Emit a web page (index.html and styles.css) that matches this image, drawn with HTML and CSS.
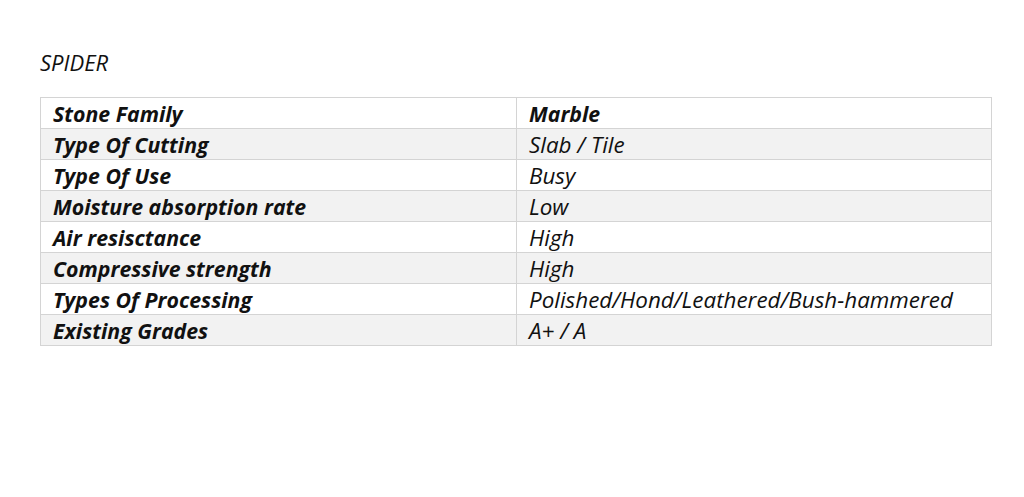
FILE: index.html
```html
<!DOCTYPE html>
<html>
<head>
<meta charset="utf-8">
<link rel="stylesheet" href="styles.css">
</head>
<body>
<div class="page">
  <p class="title">SPIDER</p>
  <table class="spec">
    <tr><td class="key">Stone Family</td><td class="val strong">Marble</td></tr>
    <tr class="alt"><td class="key">Type Of Cutting</td><td class="val">Slab / Tile</td></tr>
    <tr><td class="key">Type Of Use</td><td class="val">Busy</td></tr>
    <tr class="alt"><td class="key">Moisture absorption rate</td><td class="val">Low</td></tr>
    <tr><td class="key">Air resisctance</td><td class="val">High</td></tr>
    <tr class="alt"><td class="key">Compressive strength</td><td class="val">High</td></tr>
    <tr><td class="key">Types Of Processing</td><td class="val">Polished/Hond/Leathered/Bush-hammered</td></tr>
    <tr class="alt"><td class="key">Existing Grades</td><td class="val">A+ / A</td></tr>
  </table>
</div>
</body>
</html>
```
FILE: styles.css
```css
html, body {
  margin: 0;
  padding: 0;
  background: #ffffff;
}
.page {
  padding: 47px 32px 0 40px;
  font-family: "Open Sans", "Liberation Sans", sans-serif;
  font-style: italic;
  color: #111111;
}
.title {
  margin: 0 0 20px 0;
  font-size: 22px;
  line-height: 30px;
}
.spec {
  width: 952px;
  border-collapse: collapse;
  font-size: 22.4px;
}
.spec td {
  border: 1px solid #d4d4d4;
  height: 30px;
  padding: 0 12px;
  line-height: 29px;
  vertical-align: middle;
  white-space: nowrap;
}
.spec .key {
  width: 451px;
  font-weight: 700;
  font-size: 21.3px;
}
.spec .strong {
  font-weight: 700;
  font-size: 21.3px;
}
.spec tr.alt td {
  background: #f2f2f2;
}
```
